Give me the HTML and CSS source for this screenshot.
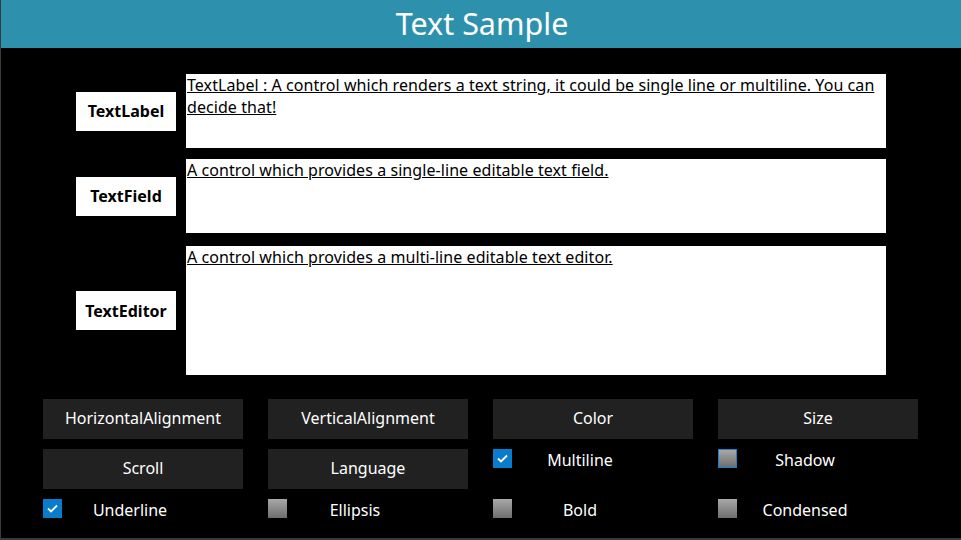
FILE: index.html
```html
<!DOCTYPE html>
<html>
<head>
<meta charset="utf-8">
<link rel="stylesheet" href="styles.css">
</head>
<body>
<div class="screen">
  <header class="title-bar">Text Sample</header>
  <section class="samples">
    <div class="sample sample-label">
      <div class="name">TextLabel</div>
      <div class="box">TextLabel : A control which renders a text string, it could be single line or multiline. You can decide that!</div>
    </div>
    <div class="sample sample-field">
      <div class="name">TextField</div>
      <div class="box">A control which provides a single-line editable text field.</div>
    </div>
    <div class="sample sample-editor">
      <div class="name">TextEditor</div>
      <div class="box">A control which provides a multi-line editable text editor.</div>
    </div>
  </section>
  <section class="controls">
    <div class="btn">HorizontalAlignment</div>
    <div class="btn">VerticalAlignment</div>
    <div class="btn">Color</div>
    <div class="btn">Size</div>
    <div class="btn">Scroll</div>
    <div class="btn">Language</div>
    <div class="check"><span class="cb on"><svg viewBox="0 0 19 19" width="19" height="19"><path d="M5 9.5 L8 12.5 L14 6.5" fill="none" stroke="#fff" stroke-width="1.8"/></svg></span><span class="lbl">Multiline</span></div>
    <div class="check"><span class="cb focus"></span><span class="lbl">Shadow</span></div>
    <div class="check low"><span class="cb on"><svg viewBox="0 0 19 19" width="19" height="19"><path d="M5 9.5 L8 12.5 L14 6.5" fill="none" stroke="#fff" stroke-width="1.8"/></svg></span><span class="lbl">Underline</span></div>
    <div class="check low"><span class="cb"></span><span class="lbl">Ellipsis</span></div>
    <div class="check low"><span class="cb"></span><span class="lbl">Bold</span></div>
    <div class="check low"><span class="cb"></span><span class="lbl">Condensed</span></div>
  </section>
</div>
</body>
</html>
```
FILE: styles.css
```css
* { box-sizing: border-box; }
html, body { margin: 0; padding: 0; background: #000; }
body { font-family: "Noto Sans", "Open Sans", sans-serif; }
.screen {
  width: 961px;
  height: 540px;
  background: #000;
  border-left: 1px solid #3a3a3e;
  border-bottom: 2px solid #3a3a3e;
  overflow: hidden;
}
.title-bar {
  height: 48px;
  background: #2d91ae;
  color: #fff;
  font-size: 30.5px;
  line-height: 46px;
  text-align: center;
  padding-left: 2px;
}
.samples {
  padding: 26px 0 0 75px;
  display: flex;
  flex-direction: column;
  gap: 11px;
}
.sample {
  display: flex;
  align-items: center;
  gap: 10px;
}
.sample-editor { margin-top: 2px; }
.name {
  width: 100px;
  height: 39px;
  background: #fff;
  color: #000;
  font-weight: bold;
  font-size: 16px;
  display: flex;
  align-items: center;
  justify-content: center;
}
.box {
  width: 700px;
  background: #fff;
  color: #000;
  font-size: 16px;
  line-height: 22px;
  text-decoration: underline;
  padding: 0 1px;
  letter-spacing: 0.07px;
}
.sample-label .box, .sample-field .box { height: 74px; }
.sample-editor .box { height: 129px; }
.controls {
  margin: 24px 0 0 42px;
  display: grid;
  grid-template-columns: repeat(4, 200px);
  column-gap: 25px;
  row-gap: 10px;
}
.btn {
  height: 40px;
  background: #212121;
  color: #fff;
  font-size: 16px;
  display: flex;
  align-items: center;
  justify-content: center;
  padding-bottom: 2px;
}
.check {
  display: flex;
  align-items: flex-start;
  height: 40px;
  color: #fff;
  font-size: 16px;
}
.check.low { height: 22px; }
.cb {
  width: 19px;
  height: 19px;
  flex: none;
  background: linear-gradient(#a8a8a8, #6e6e6e);
  display: block;
}
.cb svg { display: block; }
.cb.on { background: #0a7ccc; }
.cb.focus { border: 1px solid #1a7fcf; }
.lbl {
  width: 136px;
  text-align: center;
  line-height: 22px;
}
```
